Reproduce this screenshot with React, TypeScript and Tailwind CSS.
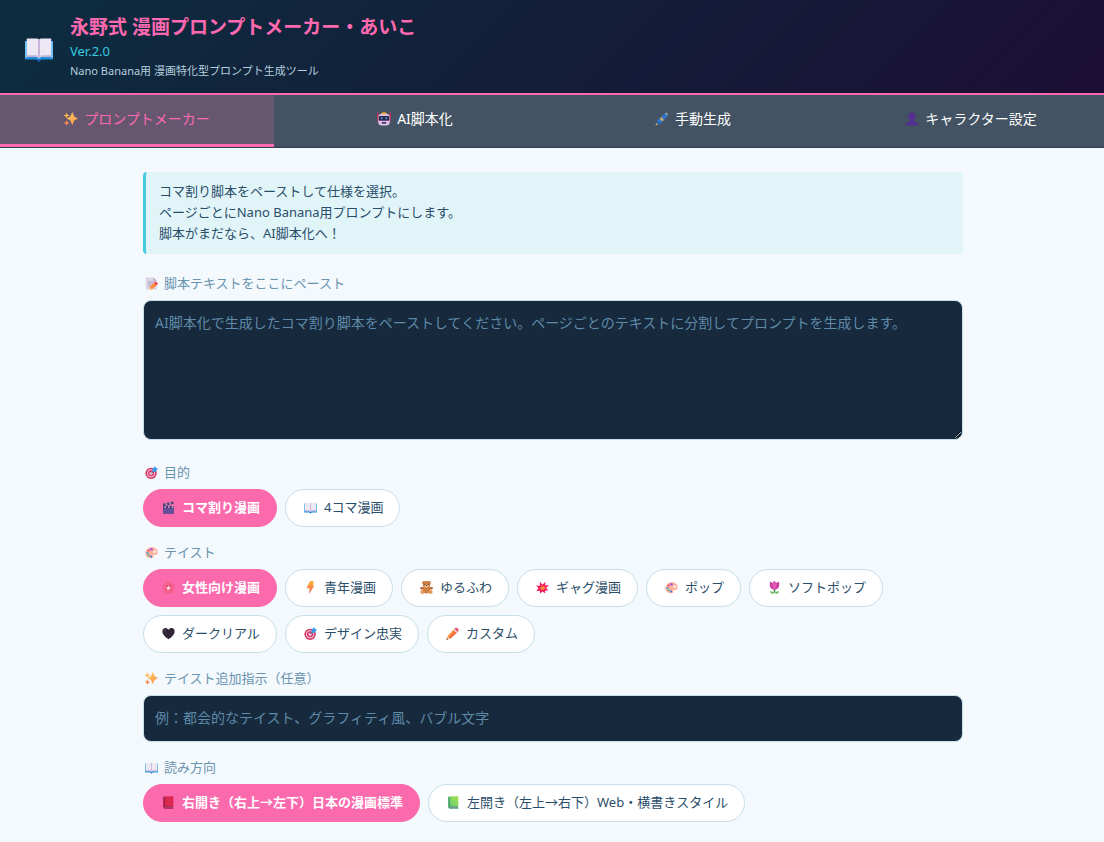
import { useState, type ReactNode } from "react";

type IconName =
  | "sparkles" | "robot" | "pen" | "person" | "memo" | "target" | "clapper" | "book"
  | "palette" | "flower" | "bolt" | "bear" | "burst" | "tulip" | "heart" | "pencil"
  | "redBook" | "greenBook";

const drawings: Record<IconName, ReactNode> = {
  sparkles: (
    <>
      <linearGradient id="spark" x1="0" y1="0" x2="1" y2="1">
        <stop offset="0" stopColor="#ffd45a" />
        <stop offset="1" stopColor="#f98a50" />
      </linearGradient>
      <path fill="url(#spark)" d="M19 0l4.500 10.500L32 15l-8.500 4.500L19 30l-4.500-10.500L6 15l8.500-4.500z" />
      <path fill="#ffb84d" d="M6 1l2 5 5 2-5 2-2 5-2-5-5-2 5-2z" />
      <path fill="#f98a50" d="M6 18l2 5 5 2-5 2-2 5-2-5-5-2 5-2z" />
    </>
  ),
  robot: (
    <>
      <path stroke="#d6335f" strokeWidth="3" d="M2 1v18M30 1v18" />
      <path stroke="#c0305f" strokeWidth="3" d="M3 17v8M29 17v8" />
      <rect x="3" y="4" width="26" height="27" rx="8" fill="#dcc3ea" />
      <path fill="#e8a83c" d="M9 5c1-6 13-6 14 0z" />
      <rect x="4" y="9" width="24" height="11" rx="3" fill="#322650" />
      <circle cx="11" cy="14" r="2.500" fill="#3f8fd6" />
      <circle cx="21" cy="14" r="2.500" fill="#3f8fd6" />
      <rect x="11" y="23" width="10" height="4" rx="1" fill="#4b3963" />
    </>
  ),
  pen: (
    <>
      <path fill="#3377c9" d="M23 2c4-3 9 2 6 7L12 27l-7-7z" />
      <path fill="#e9b949" d="M14 12l6 6-3 3-6-6zM23 2l7 2-3 3zM1 31l2-6 4 4z" />
      <path fill="#2c65b5" d="M3 25l3-6 7 7-6 3z" />
    </>
  ),
  person: (
    <path fill="#56308f" d="M16 1c6 0 9 4 8 9 0 3-1 6-3 8v3c5 1 10 4 10 10H1c0-6 5-9 10-10v-3c-2-2-3-5-3-8-1-5 2-9 8-9z" />
  ),
  memo: (
    <>
      <path fill="#ddd4e5" d="M2 1h19l8 8v22H2z" />
      <path fill="#b9a6c7" d="M21 1l8 8h-8z" />
      <path stroke="#a696b6" strokeWidth="2" d="M7 12h16M7 17h14M7 22h8" />
      <path fill="#ff8a3d" d="M25 12l6 6-13 12-7 1 1-7z" />
      <path fill="#e94a57" d="M25 12c3-2 8 3 6 6l-3 2-6-6z" />
      <path fill="#f8c990" d="M12 24l5 6-7 2z" />
    </>
  ),
  target: (
    <>
      <circle cx="15" cy="18" r="14" fill="#d83463" />
      <circle cx="15" cy="18" r="10" fill="#f2c7da" />
      <circle cx="15" cy="18" r="7.500" fill="#d83463" />
      <circle cx="15" cy="18" r="4" fill="#f2c7da" />
      <path stroke="#385c91" strokeWidth="2" d="M15 18L26 7" />
      <path fill="#369be8" d="M18 8l7-8 2 5 5 2-7 8-6-1z" />
    </>
  ),
  clapper: (
    <>
      <path fill="#44336c" d="M3 12h26v19H3z" />
      <path fill="#66529a" d="M3 18h26v13H3z" />
      <path fill="#554073" d="M2 7L28 1l1 6L3 13z" />
      <path fill="#bfa8dc" d="M8 6l3-1 2 5-3 1zM18 4l3-1 2 5-3 1zM7 13h4l-2 4H5zM16 13h4l-2 4h-4zM25 13h4l-2 4h-4z" />
    </>
  ),
  book: (
    <>
      <path fill="#2391dc" d="M0 7h32v21H19l-3 2-3-2H0z" />
      <path fill="#6bc6f5" d="M0 7h2v19H0zM30 7h2v19h-2z" />
      <path fill="#eee8f5" d="M2 4h12l2 1 2-1h12v21H18l-2 2-2-2H2z" />
      <path fill="#c5afd8" d="M15 5h2v21h-2zM2 23h12v2H2zM18 23h12v2H18z" />
      <path fill="#165cae" d="M13 28h6l-3 3z" />
    </>
  ),
  palette: (
    <>
      <path fill="#ffb29c" d="M15 3C25 2 32 8 31 17c-1 5-5 6-9 5-2 0-3 1-1 4 1 3-3 5-8 4C5 29 0 24 1 16 2 8 8 4 15 3z" />
      <circle cx="24" cy="14" r="3" fill="#f7f3f8" />
      <circle cx="16" cy="8" r="3" fill="#a94ae0" />
      <circle cx="9" cy="11" r="2.500" fill="#ec3b77" />
      <circle cx="6" cy="17" r="2.500" fill="#3e9bec" />
      <circle cx="9" cy="23" r="2.500" fill="#36b38a" />
      <circle cx="15" cy="26" r="2.500" fill="#3b79da" />
    </>
  ),
  flower: (
    <>
      <g fill="#f5608c">
        <circle cx="16" cy="8" r="7" />
        <circle cx="24" cy="14" r="7" />
        <circle cx="21" cy="24" r="7" />
        <circle cx="11" cy="24" r="7" />
        <circle cx="8" cy="14" r="7" />
      </g>
      <circle cx="16" cy="17" r="7" fill="#e63d66" />
      <path fill="#ffd3dc" d="M16 10l2 5 5 1-4 3 1 5-4-3-4 3 1-5-4-3 5-1z" />
    </>
  ),
  bolt: (
    <>
      <linearGradient id="bolt" x1="0" y1="0" x2="0" y2="1">
        <stop offset="0" stopColor="#ffb13d" />
        <stop offset="1" stopColor="#f2604f" />
      </linearGradient>
      <path fill="url(#bolt)" d="M15 0h9l-2 11h4L12 32l2-14H6z" />
    </>
  ),
  bear: (
    <g fill="#cf7f42">
      <circle cx="9" cy="4" r="4" />
      <circle cx="23" cy="4" r="4" />
      <ellipse cx="16" cy="9" rx="9" ry="9" />
      <ellipse cx="16" cy="23" rx="9" ry="8" />
      <ellipse cx="5" cy="18" rx="5" ry="3" fill="#b8622f" />
      <ellipse cx="27" cy="18" rx="5" ry="3" fill="#b8622f" />
      <circle cx="6" cy="27" r="5" fill="#e59a5b" />
      <circle cx="26" cy="27" r="5" fill="#e59a5b" />
      <ellipse cx="16" cy="12" rx="5" ry="4" fill="#f3bd83" />
      <circle cx="12" cy="8" r="1.500" fill="#40253b" />
      <circle cx="20" cy="8" r="1.500" fill="#40253b" />
      <circle cx="16" cy="11" r="1.500" fill="#40253b" />
    </g>
  ),
  burst: (
    <>
      <path fill="#ed1e62" d="M10 2l6 7 7-7v9l9-1-7 7 5 6-8 1 1 7-7-5-6 5-1-7-8 1 5-7-6-7 9 1z" />
      <path fill="#ff8a35" d="M13 11l3 3 4-3v4l4 2-4 2v4l-4-2-4 2v-4l-3-2 4-2z" />
    </>
  ),
  tulip: (
    <>
      <path fill="#3f9a5a" d="M14 18h4v11h-4z" />
      <path fill="#6bb553" d="M15 31C8 32 5 29 5 25c6 0 9 2 10 6zM17 31c7 1 10-2 10-6-6 0-9 2-10 6z" />
      <path fill="#cc3da2" d="M5 1l6 4 5-5 5 5 6-4c2 12-1 20-11 20S3 13 5 1z" />
      <path fill="#e05ab6" d="M16 0c7 6 7 17 0 20-7-3-7-14 0-20z" />
    </>
  ),
  heart: (
    <>
      <path fill="#302638" d="M16 30C7 24 0 17 1 9 2 2 11 0 16 7 21 0 30 2 31 9c1 8-6 15-15 21z" />
      <path fill="#574763" d="M4 9c1-4 5-5 8-3-4 1-6 3-7 8z" />
    </>
  ),
  pencil: (
    <>
      <path fill="#ff8b45" d="M20 5l8 8L10 29l-8 2 2-9z" />
      <path fill="#f26b3a" d="M24 9l4 4L10 29l-3-3z" />
      <path fill="#dfd1e7" d="M18 7l3-3 8 8-3 3z" />
      <path fill="#ec4b5e" d="M21 4c4-6 14 2 8 8z" />
      <path fill="#f7ca9b" d="M4 22l6 7-9 3z" />
      <path fill="#55324c" d="M2 27l3 3-4 2z" />
    </>
  ),
  redBook: (
    <>
      <path fill="#ab1d49" d="M3 2h24v28H5l-2-2z" />
      <path fill="#dc294f" d="M8 1h20v25H8z" />
      <path fill="#a0608f" d="M6 27h21v2H6z" />
      <path fill="#9c1740" d="M6 29h22v2H6z" />
    </>
  ),
  greenBook: (
    <>
      <linearGradient id="green" x1="1" y1="0" x2="0" y2="1">
        <stop offset="0" stopColor="#a9e34b" />
        <stop offset="1" stopColor="#65cc78" />
      </linearGradient>
      <path fill="#3d9d63" d="M3 2h24v28H5l-2-2z" />
      <path fill="url(#green)" d="M7 1h21v25H7z" />
      <path fill="#9c91c6" d="M6 27h21v2H6z" />
      <path fill="#449a72" d="M6 29h22v2H6z" />
    </>
  ),
};

function Icon({ name, className = "size-[13px]" }: { name: IconName; className?: string }) {
  return (
    <svg viewBox="0 0 32 32" aria-hidden="true" className={`shrink-0 ${className}`}>
      {drawings[name]}
    </svg>
  );
}

type Option = { icon: IconName; label: string };

const tabs: Option[] = [
  { icon: "sparkles", label: "プロンプトメーカー" },
  { icon: "robot", label: "AI脚本化" },
  { icon: "pen", label: "手動生成" },
  { icon: "person", label: "キャラクター設定" },
];

const purposes: Option[] = [
  { icon: "clapper", label: "コマ割り漫画" },
  { icon: "book", label: "4コマ漫画" },
];

const tastes: Option[] = [
  { icon: "flower", label: "女性向け漫画" },
  { icon: "bolt", label: "青年漫画" },
  { icon: "bear", label: "ゆるふわ" },
  { icon: "burst", label: "ギャグ漫画" },
  { icon: "palette", label: "ポップ" },
  { icon: "tulip", label: "ソフトポップ" },
  { icon: "heart", label: "ダークリアル" },
  { icon: "target", label: "デザイン忠実" },
  { icon: "pencil", label: "カスタム" },
];

const directions: Option[] = [
  { icon: "redBook", label: "右開き（右上→左下）日本の漫画標準" },
  { icon: "greenBook", label: "左開き（左上→右下）Web・横書きスタイル" },
];

const headingStyle = "mb-2 flex items-center gap-1 text-[13px] leading-[18px] text-[#6a93b0]";
const fieldStyle =
  "block w-full rounded-lg border border-[#c8dfea] bg-[#16293d] px-[11px] text-sm text-white placeholder:text-[#5f8aa8] placeholder:opacity-100 outline-none focus:border-[#ff69b0]";

function Heading({ icon, children }: { icon: IconName; children: ReactNode }) {
  return (
    <>
      <span className="flex w-[17px] justify-center">
        <Icon name={icon} />
      </span>
      {children}
    </>
  );
}

function Choices({ icon, title, options }: { icon: IconName; title: string; options: Option[] }) {
  const [selected, setSelected] = useState(0);
  return (
    <section className="mb-4">
      <h2 className={headingStyle}>
        <Heading icon={icon}>{title}</Heading>
      </h2>
      <div className="flex flex-wrap gap-2">
        {options.map((option, i) => (
          <button
            key={option.label}
            type="button"
            aria-pressed={i === selected}
            onClick={() => setSelected(i)}
            className={`flex h-[38px] items-center gap-[5px] rounded-full border px-4 pb-0.5 text-[13px] leading-5 ${
              i === selected
                ? "border-[#fb6aad] bg-[#fb6aad] font-bold text-white"
                : "border-[#c8dfea] bg-white text-[#2a4d69]"
            }`}
          >
            <span className="flex w-[17px] justify-center">
              <Icon name={option.icon} />
            </span>
            {option.label}
          </button>
        ))}
      </div>
    </section>
  );
}

export default function App() {
  const [tab, setTab] = useState(0);
  return (
    <div className="min-h-screen bg-[#f3f9fc] font-['Noto_Sans','Noto_Sans_CJK_JP',sans-serif]">
      <header className="flex items-center gap-4 border-b-2 border-[#ff69b0] bg-[linear-gradient(135deg,#0d2d40_0%,#151b38_60%,#1c0e34_100%)] px-6 pt-[14px] pb-[13px]">
        <span className="flex w-[30px] justify-center pt-1">
          <Icon name="book" className="size-[28px]" />
        </span>
        <div>
          <h1 className="text-[19px] leading-[27px] font-bold text-[#ff69b0]">
            永野式 漫画プロンプトメーカー・あいこ
          </h1>
          <p className="text-[13px] leading-5 text-[#35cbe0]">Ver.2.0</p>
          <p className="text-[11px] leading-[19px] text-[#b5cfdf]">
            Nano Banana用 漫画特化型プロンプト生成ツール
          </p>
        </div>
      </header>

      <nav className="overflow-hidden border-b border-[#33404f] bg-[#435363]">
        <div className="-mr-1 flex gap-1">
          {tabs.map((item, i) => (
            <button
              key={item.label}
              type="button"
              onClick={() => setTab(i)}
              className={`flex h-[52px] flex-1 items-center justify-center gap-1 border-b-3 pr-0.5 pb-0.5 text-sm whitespace-nowrap ${
                i === tab
                  ? "border-[#ff69b0] bg-[#66566f] text-[#ff69b0]"
                  : "border-transparent text-white"
              }`}
            >
              <span className="flex w-[18px] justify-center">
                <Icon name={item.icon} className="size-[14px]" />
              </span>
              {item.label}
            </button>
          ))}
        </div>
      </nav>

      <main className="pt-6 pb-10 pl-0.5">
        <div className="mx-auto max-w-[820px]">
          <p className="mb-5 rounded border-l-3 border-[#45cbe0] bg-[#e1f5f9] px-[13px] pt-[9px] pb-[10px] text-[13px] leading-[21px] text-[#2a4d69]">
            コマ割り脚本をペーストして仕様を選択。
            <br />
            ページごとにNano Banana用プロンプトにします。
            <br />
            脚本がまだなら、AI脚本化へ！
          </p>

          <label htmlFor="script" className={headingStyle}>
            <Heading icon="memo">脚本テキストをここにペースト</Heading>
          </label>
          <textarea
            id="script"
            className={`${fieldStyle} mb-[23px] h-[140px] resize-y py-[11px] leading-[22px]`}
            placeholder="AI脚本化で生成したコマ割り脚本をペーストしてください。ページごとのテキストに分割してプロンプトを生成します。"
          />

          <Choices icon="target" title="目的" options={purposes} />
          <Choices icon="palette" title="テイスト" options={tastes} />

          <label htmlFor="extra" className={headingStyle}>
            <Heading icon="sparkles">テイスト追加指示（任意）</Heading>
          </label>
          <input
            id="extra"
            type="text"
            className={`${fieldStyle} mb-4 h-[47px] pb-0.5`}
            placeholder="例：都会的なテイスト、グラフィティ風、バブル文字"
          />

          <Choices icon="book" title="読み方向" options={directions} />

          <h2 className={headingStyle}>
            <Heading icon="palette">カラーモード</Heading>
          </h2>
        </div>
      </main>
    </div>
  );
}
